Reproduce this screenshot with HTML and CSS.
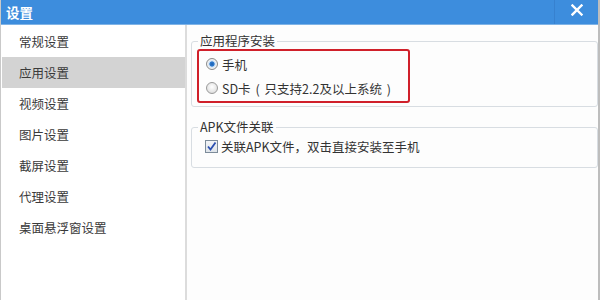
FILE: index.html
```html
<!DOCTYPE html>
<html lang="zh-CN">
<head>
<meta charset="utf-8">
<title>设置</title>
<link rel="stylesheet" href="styles.css">
</head>
<body>
<div class="window">
  <div class="titlebar">
    <div class="title">设置</div>
    <div class="close">
      <svg width="12" height="12" viewBox="0 0 12 12"><path d="M1.5 1.5 L10.5 10.5 M10.5 1.5 L1.5 10.5" stroke="#fff" stroke-width="2.4" stroke-linecap="square"/></svg>
    </div>
  </div>
  <div class="main">
    <div class="sidebar">
      <div class="item">常规设置</div>
      <div class="item active">应用设置</div>
      <div class="item">视频设置</div>
      <div class="item">图片设置</div>
      <div class="item">截屏设置</div>
      <div class="item">代理设置</div>
      <div class="item">桌面悬浮窗设置</div>
    </div>
    <div class="content">
      <fieldset class="group">
        <legend>应用程序安装</legend>
        <div class="highlight">
          <div class="row"><span class="radio checked"></span><span class="label">手机</span></div>
          <div class="row"><span class="radio"></span><span class="label">SD卡<span class="paren">(</span>只支持2.2及以上系统<span class="paren">)</span></span></div>
        </div>
      </fieldset>
      <fieldset class="group group2">
        <legend>APK文件关联</legend>
        <div class="row crow">
          <span class="check"><svg width="11" height="11" viewBox="0 0 11 11"><path d="M2 5.5 L4.5 8.5 L9.5 1.5" fill="none" stroke="#2b4fb0" stroke-width="1.8"/></svg></span>
          <span class="label">关联APK文件，双击直接安装至手机</span>
        </div>
      </fieldset>
    </div>
  </div>
</div>
</body>
</html>
```
FILE: styles.css
```css
html, body {
  margin: 0;
  padding: 0;
  background: #fdfdfd;
}
body {
  width: 600px;
  height: 300px;
  overflow: hidden;
  font-family: "Noto Sans CJK SC", "Noto Sans", sans-serif;
  font-size: 12.5px;
  color: #3a3a3a;
  text-spacing-trim: space-all;
}
.window {
  width: 600px;
  height: 300px;
  display: flex;
  flex-direction: column;
  box-sizing: border-box;
  border-left: 1px solid #c9c9c9;
  border-right: 2px solid #bdbdbd;
}
.titlebar {
  height: 24px;
  background: #3d8ddd;
  display: flex;
  align-items: center;
  border-bottom: 1px solid #7fb3e6;
  flex: none;
}
.title {
  flex: 1;
  color: #fff;
  font-weight: bold;
  font-size: 13.5px;
  padding-left: 5px;
  line-height: 24px;
}
.close {
  width: 44px;
  height: 24px;
  border-left: 1px solid #3781cf;
  display: flex;
  align-items: center;
  justify-content: center;
  padding-bottom: 4px;
  box-sizing: border-box;
}
.main {
  flex: 1;
  display: flex;
}
.sidebar {
  width: 184px;
  padding-top: 1px;
  background: #fff;
  border-right: 2px solid #dcdcdc;
  flex: none;
}
.item {
  height: 31px;
  line-height: 31px;
  padding-left: 17px;
  margin-left: 1px;
  color: #3a3a3a;
}
.item.active {
  background: #d3d3d3;
}
.content {
  flex: 1;
  padding: 0 0 0 4px;
}
.group {
  margin: 8px 0 0 0;
  padding: 0 5px 3px 5px;
  border: 1px solid #d8dde2;
  border-radius: 3px;
}
.group legend {
  padding: 0 2px;
  margin-left: 1px;
  line-height: 16px;
  color: #333;
}
.group2 {
  margin-top: 12px;
  padding-bottom: 10px;
}
.highlight {
  width: 202px;
  border: 2px solid #d0202a;
  border-radius: 3px;
  padding: 1px 0 1px 7px;
}
.row {
  height: 24px;
  display: flex;
  align-items: center;
}
.radio {
  width: 12px;
  height: 12px;
  border-radius: 50%;
  box-sizing: border-box;
  border: 1px solid #9a9a9a;
  background: radial-gradient(circle at 50% 40%, #ffffff 0%, #e6e6e6 60%, #cfcfcf 100%);
  margin-right: 4px;
  flex: none;
}
.radio.checked {
  background: radial-gradient(circle, #1f5fae 0, #2e7bd0 2.2px, #cfe2f5 3px, #f2f2f2 4.5px, #d8d8d8 6px);
  border-color: #8c8c8c;
}
.label {
  color: #333;
  white-space: nowrap;
}
.paren {
  display: inline-block;
  width: 14px;
  text-align: center;
}
.crow {
  padding-left: 8px;
  height: 22px;
}
.check {
  width: 13px;
  height: 13px;
  box-sizing: border-box;
  border: 1px solid #7d8c9a;
  background: linear-gradient(#f2f4f7, #dfe4ea);
  display: flex;
  align-items: center;
  justify-content: center;
  margin-right: 3px;
  flex: none;
}
```
